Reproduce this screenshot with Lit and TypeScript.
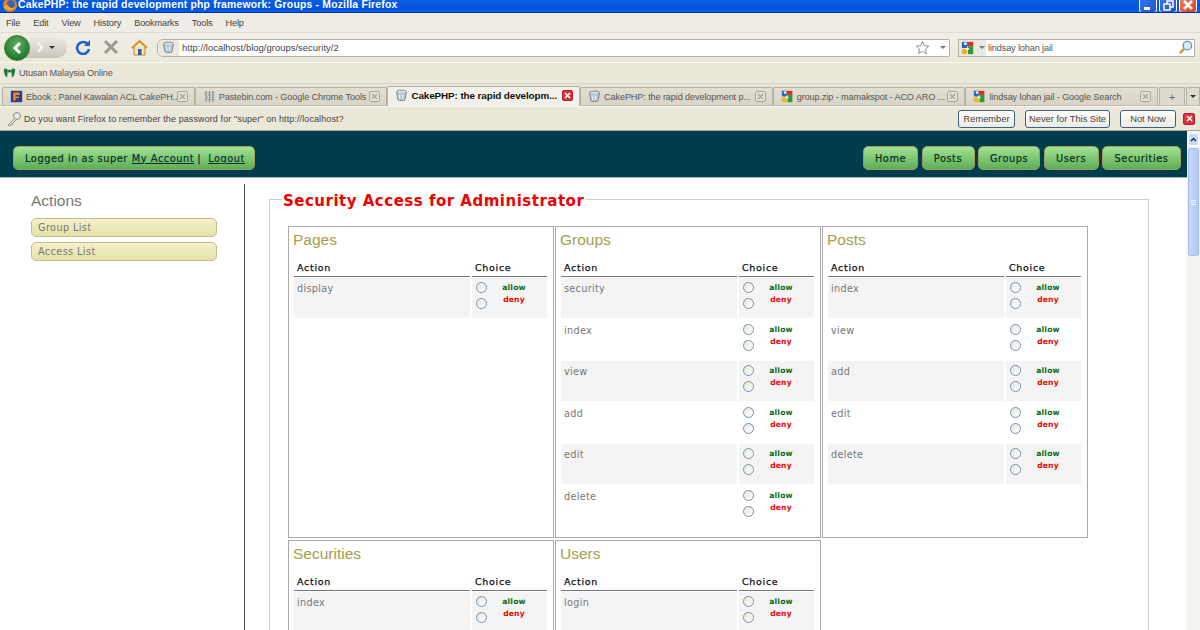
import { LitElement, html, css, svg } from 'lit'
import { customElement } from 'lit/decorators.js'

type Panel = { title: string; actions: string[] }

// only the rows above the fold of the screenshot
const panels: Panel[] = [
  { title: 'Pages', actions: ['display'] },
  { title: 'Groups', actions: ['security', 'index', 'view', 'add', 'edit', 'delete'] },
  { title: 'Posts', actions: ['index', 'view', 'add', 'edit', 'delete'] },
  { title: 'Securities', actions: ['index'] },
  { title: 'Users', actions: ['login'] },
]

const globeIcon = svg`<svg class="ico" viewBox="0 0 16 16"><ellipse cx="8" cy="4" rx="6" ry="2.6" fill="#dfe6ea" stroke="#5c7488"/><path d="M2 4l1.6 9c1 1.6 7.800 1.600 8.800 0L14 4" fill="#b9c8d2" stroke="#5c7488"/><path d="M5 7l1 6M9 7l1 5" stroke="#fff" fill="none"/></svg>`
const googleIcon = svg`<svg class="ico" viewBox="0 0 16 16"><rect x="1" y="1" width="6" height="7" fill="#2a62c8"/><rect x="7" y="1" width="7" height="5" fill="#d8352a"/><rect x="8" y="6" width="6" height="9" fill="#2d9a3c"/><circle cx="4" cy="12" r="3.200" fill="#f0b41c"/><circle cx="5" cy="3" r="1.600" fill="#fff"/><rect x="6" y="8" width="3" height="2" fill="#fff"/></svg>`
const ebookIcon = svg`<svg class="ico" viewBox="0 0 16 16"><rect x="1" y="1" width="14" height="14" fill="#28408c"/><path d="M4 3h8v3H7v2h4v2H7v3H4z" fill="#f08a1c"/></svg>`
const pastebinIcon = svg`<svg class="ico" viewBox="0 0 16 16"><path d="M2 3h3M7 3h2M11 3h3M2 6h2M6 6h4M12 6h2M3 9h3M8 9h2M12 9h2M2 12h2M6 12h2M10 12h4M4 1v14M8 1v14M12 1v14" stroke="#77808a" fill="none"/></svg>`

const tabs = [
  { label: 'Ebook : Panel Kawalan ACL CakePH...', icon: ebookIcon },
  { label: 'Pastebin.com - Google Chrome Tools', icon: pastebinIcon },
  { label: 'CakePHP: the rapid developm...', icon: globeIcon, active: true },
  { label: 'CakePHP: the rapid development p...', icon: globeIcon },
  { label: 'group.zip - mamakspot - ACO ARO ...', icon: googleIcon },
  { label: 'lindsay lohan jail - Google Search', icon: googleIcon },
]

@customElement('app-root')
export class AppRoot extends LitElement {
  static styles = css`
    :host {
      display: block;
      width: 1200px;
      height: 630px;
      overflow: hidden;
      background: #fff;
      font-family: 'Liberation Sans', Arial, sans-serif;
    }

    .ico {
      width: 16px;
      height: 16px;
      flex: none;
      display: block;
    }

    /* window chrome */
    .titlebar {
      height: 13px;
      box-sizing: border-box;
      display: flex;
      align-items: flex-end;
      justify-content: space-between;
      overflow: hidden;
      padding: 0 3px 0 2px;
      background: linear-gradient(#0a5ee6, #0350dc 70%, #0a62ea);
      border-bottom: 1px solid #0a2f9c;
      color: #fff;
      font-weight: bold;
      font-size: 10.400px;
    }

    .title {
      display: flex;
      align-items: center;
      gap: 0;
      height: 15px;
      flex: none;
      white-space: nowrap;
      letter-spacing: 0.200px;
    }

    .winbtns {
      display: flex;
      gap: 2px;
      flex: none;
      height: 21px;
    }

    .winbtn {
      width: 16px;
      height: 20px;
      border: 1px solid #fff;
      border-radius: 3px;
      background: linear-gradient(135deg, #3c7cf0, #2052d0);
      position: relative;
    }

    .winbtn.close {
      background: linear-gradient(135deg, #f09070, #d8401c);
    }

    .winbtn svg {
      position: absolute;
      left: 2px;
      bottom: 1px;
      width: 12px;
      height: 12px;
    }

    .menubar {
      height: 19px;
      background: #eeece4;
      display: flex;
      align-items: center;
      gap: 13px;
      padding: 0 0 0 6px;
      font-size: 9.200px;
      letter-spacing: -0.150px;
      color: #444;
      border-bottom: 1px solid #e0ddd0;
    }

    .navbar {
      height: 29px;
      background: linear-gradient(#f0eee6, #ebe8da);
      border-bottom: 1px solid #f8f6ee;
      display: flex;
      align-items: center;
      padding: 0 5px 0 4px;
    }

    .history {
      display: flex;
      align-items: center;
      flex: none;
      width: 63px;
      height: 21px;
      background: linear-gradient(#eceae2, #c8c6bc);
      border-radius: 11px;
      position: relative;
    }

    .back {
      width: 26px;
      height: 26px;
      border-radius: 50%;
      background: radial-gradient(circle at 50% 35%, #62b060, #1e7a26 75%);
      border: 1px solid #3d7a40;
      box-sizing: border-box;
      display: flex;
      align-items: center;
      justify-content: center;
      flex: none;
    }

    .forward {
      width: 18px;
      display: flex;
      justify-content: center;
      margin-left: 1px;
    }

    .caret {
      width: 0;
      height: 0;
      border: 3px solid transparent;
      border-top: 3px solid #333;
      border-bottom: 0;
      flex: none;
    }

    .tool {
      width: 28px;
      display: flex;
      justify-content: center;
      flex: none;
    }

    .tools {
      display: flex;
      margin-left: 2px;
      margin-right: 4px;
      width: 84px;
      flex: none;
      gap: 0;
    }

    .urlbar {
      width: 793px;
      flex: none;
      height: 18px;
      box-sizing: border-box;
      background: #fff;
      border: 1px solid #b5b3a5;
      border-radius: 6px 2px 2px 6px;
      display: flex;
      align-items: center;
      font-size: 9.400px;
      color: #444;
    }

    .urlicon {
      width: 21px;
      height: 100%;
      background: #ebe9df;
      border-radius: 6px 0 0 6px;
      display: flex;
      align-items: center;
      justify-content: center;
      margin-right: 3px;
      flex: none;
    }

    .urlicon .ico {
      width: 13px;
      height: 13px;
    }

    .urltext {
      flex: 1;
      letter-spacing: 0.050px;
    }

    .urlbar svg.star {
      width: 15px;
      height: 15px;
      margin-right: 10px;
    }

    .urlbar .caret {
      margin-right: 3px;
      border-top-color: #777;
    }

    .searchbar {
      width: 237px;
      margin-left: 8px;
      flex: none;
      height: 18px;
      box-sizing: border-box;
      background: #fff;
      border: 1px solid #b5b3a5;
      display: flex;
      align-items: center;
      font-size: 9.200px;
      letter-spacing: -0.150px;
      color: #555;
    }

    .engine {
      width: 27px;
      height: 100%;
      background: #ebe9df;
      display: flex;
      align-items: center;
      gap: 3px;
      padding-left: 2px;
      margin-right: 2px;
      box-sizing: border-box;
      flex: none;
    }

    .engine .ico {
      width: 14px;
      height: 14px;
    }

    .engine .caret {
      border-top-color: #777;
    }

    .searchtext {
      flex: 1;
    }

    .searchbar svg {
      width: 15px;
      height: 15px;
      margin-right: 1px;
    }

    .bookmarks {
      height: 20px;
      background: #ebe8da;
      display: flex;
      align-items: center;
      gap: 3px;
      padding: 0 0 0 3px;
      font-size: 9.200px;
      letter-spacing: -0.150px;
      color: #555;
      border-bottom: 1px solid #d8d6ca;
    }

    .bookmarks .ico {
      width: 13px;
      height: 13px;
    }

    .tabstrip {
      height: 22px;
      box-sizing: border-box;
      background: #e9e6d8;
      border-bottom: 1px solid #bdbbae;
      display: flex;
      align-items: flex-end;
      padding: 0 0 0 2px;
      font-size: 9.100px;
      letter-spacing: -0.100px;
      color: #555;
    }

    .tab {
      flex: none;
      width: 192.700px;
      height: 18px;
      box-sizing: border-box;
      display: flex;
      align-items: center;
      gap: 3px;
      padding: 0 6px 0 7px;
      background: linear-gradient(#e2dfd2, #d8d5c8);
      border: 1px solid #b5b3a6;
      border-bottom: 0;
      border-radius: 2px 2px 0 0;
      white-space: nowrap;
    }

    .tab.active {
      height: 20px;
      margin-bottom: -1px;
      background: #f2f0e8;
      color: #111;
      font-weight: bold;
      font-size: 9.900px;
      padding-bottom: 2px;
      position: relative;
    }

    .tab .ico {
      width: 13px;
      height: 13px;
    }

    .tabtext {
      flex: 1;
      min-width: 0;
    }

    .tabclose {
      width: 11px;
      height: 11px;
      flex: none;
      box-sizing: border-box;
      border: 1px solid #a8a69a;
      border-radius: 2px;
      background: #e4e2d8;
      display: flex;
      align-items: center;
      justify-content: center;
    }

    .tabclose svg {
      width: 7px;
      height: 7px;
    }

    .tab.active .tabclose,
    .notify .tabclose {
      background: #d8343c;
      border-color: #b0202c;
    }

    .stripbtn {
      flex: none;
      height: 18px;
      box-sizing: border-box;
      width: 26px;
      background: #dedbce;
      border: 1px solid #b5b3a6;
      border-bottom: 0;
      display: flex;
      align-items: center;
      justify-content: center;
      color: #666;
      font-size: 11px;
      margin-left: 1px;
    }

    .stripbtn.narrow {
      width: 14px;
    }

    .notify {
      height: 25px;
      box-sizing: border-box;
      background: #ebe8da;
      border-top: 1px solid #f8f6ee;
      display: flex;
      align-items: center;
      padding: 0 5px 0 6px;
      font-size: 9px;
      color: #444;
      gap: 2px;
      border-bottom: 1px solid #a8a698;
    }

    .notify .msg {
      flex: 1;
      letter-spacing: 0.100px;
    }

    .notify .btns {
      display: flex;
      gap: 10px;
      margin-right: 5px;
    }

    .notifybtn {
      height: 18px;
      box-sizing: border-box;
      border: 1px solid #3c5f88;
      border-radius: 3px;
      background: linear-gradient(#fff, #ecebe2);
      display: flex;
      align-items: center;
      justify-content: center;
      font-size: 9.300px;
    }

    .notify .tabclose {
      width: 12px;
      height: 12px;
    }

    /* page */
    .viewport {
      display: flex;
      height: 499px;
    }

    .page {
      flex: 1;
      min-width: 0;
    }

    .scrollbar {
      width: 13px;
      flex: none;
      box-sizing: border-box;
      background: #f4f4ee;
      display: flex;
      flex-direction: column;
      gap: 2px;
      padding: 2px 1px 0 1px;
    }

    .scrollbtn {
      height: 11px;
      border-radius: 2px;
      background: #c8d8f6;
      border: 1px solid #fff;
      display: flex;
      align-items: center;
      justify-content: center;
    }

    .thumb {
      height: 108px;
      box-sizing: border-box;
      border-radius: 2px;
      background: linear-gradient(90deg, #c8d8f8, #b4c8f4);
      border: 1px solid #fff;
      outline: 1px solid #a9bce8;
      outline-offset: -1px;
      display: flex;
      flex-direction: column;
      justify-content: center;
      gap: 1px;
      align-items: center;
    }

    .thumb span {
      width: 5px;
      height: 1px;
      background: #eef3ff;
      display: block;
    }

    .header {
      height: 47px;
      box-sizing: border-box;
      background: #003d4c;
      border-bottom: 1px solid #a9b3b8;
      display: flex;
      align-items: flex-end;
      justify-content: space-between;
      padding: 0 6px 7px 13px;
    }

    .greenbtn {
      height: 24px;
      box-sizing: border-box;
      display: flex;
      align-items: center;
      border: 1px solid #a39c5c;
      border-radius: 5px;
      background: linear-gradient(#a2e292, #5cae58);
      color: #0a2c1c;
      font-family: 'DejaVu Sans', sans-serif;
      font-size: 9.800px;
      letter-spacing: 0.550px;
      white-space: nowrap;
      -webkit-text-stroke: 0.2px #0a2c1c;
    }

    .account {
      width: 242px;
      padding-left: 11px;
    }

    .account u {
      margin: 0 0 0 4px;
      color: #08303e;
    }

    .account u + u {
      margin: 0;
    }

    .sep {
      margin: 0 3px;
    }

    .topnav {
      display: flex;
      gap: 3.500px;
    }

    .topnav .greenbtn {
      justify-content: center;
    }

    .body {
      display: flex;
      padding-top: 6px;
    }

    .aside {
      width: 214px;
      height: 460px;
      flex: none;
      box-sizing: content-box;
      padding-left: 30px;
      border-right: 1px solid #555;
    }

    .aside h3 {
      margin: 8px 0 8px;
      padding-left: 1px;
      font-weight: normal;
      font-size: 15.500px;
      line-height: 18px;
      color: #777;
    }

    .sidebtn {
      width: 186px;
      height: 19px;
      margin: 0 0 5px 1px;
      box-sizing: border-box;
      border: 1px solid #c3c08a;
      border-radius: 5px;
      background: linear-gradient(#f3f0cc, #e4e2a8);
      font-family: 'DejaVu Sans', sans-serif;
      font-size: 9.700px;
      letter-spacing: 0.400px;
      color: #777;
      padding-left: 6px;
      display: flex;
      align-items: center;
    }

    .main {
      flex: 1;
      padding: 6px 0 0 24px;
      min-width: 0;
    }

    fieldset {
      width: 880px;
      box-sizing: border-box;
      margin: 0;
      padding: 17px 0 0 18px;
      border: 1px solid #ccc;
      min-inline-size: 0;
    }

    legend {
      padding: 3px 1px 0;
      margin-left: -6px;
      color: #f00000;
      font-family: 'DejaVu Sans', sans-serif;
      font-weight: bold;
      font-size: 15px;
      letter-spacing: 0.500px;
      line-height: 16px;
    }

    .panels {
      display: grid;
      grid-template-columns: repeat(3, 266px);
      gap: 2px 1px;
      align-items: start;
    }

    .panel {
      box-sizing: border-box;
      height: 312px;
      border: 1px solid #aaa;
      padding: 4px 5px 0 4px;
    }

    .panel h2 {
      margin: 0 0 13px;
      font-weight: normal;
      font-size: 15.500px;
      line-height: 18px;
      color: #a3a04a;
    }

    .grid {
      display: grid;
      grid-template-columns: 176px 75px;
      gap: 2px;
      margin-left: 1px;
      grid-auto-rows: 39.500px;
    }

    .gridhead {
      display: grid;
      grid-template-columns: 176px 75px;
      gap: 2px;
      margin: 0 0 1px 1px;
    }

    .head {
      height: 15px;
      box-sizing: border-box;
      border-bottom: 1px solid #777;
      padding-left: 3px;
      font-family: 'DejaVu Sans', sans-serif;
      font-size: 9.500px;
      letter-spacing: 0.700px;
      color: #111;
      line-height: 12px;
      -webkit-text-stroke: 0.25px #111;
    }

    .cell {
      font-family: 'DejaVu Sans', sans-serif;
      font-size: 9.700px;
      letter-spacing: 0.300px;
      color: #777;
      padding: 5px 0 0 3px;
      box-sizing: border-box;
    }

    .odd {
      background: #f4f4f4;
    }

    .choicecell {
      display: grid;
      grid-template-columns: 26px 1fr;
      padding: 4px 0 0 4px;
      font-weight: bold;
      font-size: 7.600px;
      letter-spacing: 0.200px;
      box-sizing: border-box;
      font-family: 'DejaVu Sans', sans-serif;
    }

    .radios {
      display: flex;
      flex-direction: column;
      gap: 5px;
    }

    input[type='radio'] {
      appearance: none;
      margin: 0;
      width: 11px;
      height: 11px;
      border: 1.500px solid #7592b2;
      border-radius: 50%;
      background: linear-gradient(135deg, #e6e6de, #fff);
      display: block;
    }

    .labels {
      text-align: center;
      line-height: 12px;
      width: 30px;
      margin: 0 0 0 -3px;
    }

    .allow {
      color: #0a6a14;
    }

    .deny {
      color: #f00000;
    }
  `

  private renderPanel(p: Panel) {
    return html`
      <section class="panel">
        <h2>${p.title}</h2>
        <div class="gridhead">
          <div class="head">Action</div>
          <div class="head">Choice</div>
        </div>
        <div class="grid">
          ${p.actions.map(
            (a, i) => html`
              <div class="cell ${i % 2 === 0 ? 'odd' : ''}">${a}</div>
              <div class="choicecell ${i % 2 === 0 ? 'odd' : ''}">
                <div class="radios">
                  <input type="radio" name="${p.title}-${a}" />
                  <input type="radio" name="${p.title}-${a}" />
                </div>
                <div class="labels">
                  <div class="allow">allow</div>
                  <div class="deny">deny</div>
                </div>
              </div>
            `
          )}
        </div>
      </section>
    `
  }

  private closeX(color = '#a8a69a') {
    return svg`<svg viewBox="0 0 7 7"><path d="M1 1l5 5M6 1l-5 5" stroke="${color}" stroke-width="1.500"/></svg>`
  }

  private renderChrome() {
    return html`
      <div class="titlebar">
        <div class="title">
          <svg class="ico" viewBox="0 0 16 16"><circle cx="8" cy="8" r="7" fill="#e8801c"/><circle cx="9" cy="7" r="4" fill="#3c64b0"/><path d="M2 9c2 5 9 6 12 0-2 3-7 3-8-1z" fill="#f4b02c"/></svg>
          <span>CakePHP: the rapid development php framework: Groups - Mozilla Firefox</span>
        </div>
        <div class="winbtns">
          <div class="winbtn"><svg viewBox="0 0 12 12"><rect x="2" y="8" width="6" height="3" fill="#fff"/></svg></div>
          <div class="winbtn"><svg viewBox="0 0 12 12"><path d="M2 5h6v6H2zM5 5V2h6v6H8" fill="none" stroke="#fff" stroke-width="1.500"/></svg></div>
          <div class="winbtn close"><svg viewBox="0 0 12 12"><path d="M2 2l8 8M10 2l-8 8" stroke="#fff" stroke-width="2.500"/></svg></div>
        </div>
      </div>
      <div class="menubar">
        <span>File</span><span>Edit</span><span>View</span><span>History</span><span>Bookmarks</span><span>Tools</span><span>Help</span>
      </div>
      <div class="navbar">
        <div class="history">
          <div class="back">
            <svg width="12" height="14" viewBox="0 0 12 14"><path d="M9 2L4 7l5 5" fill="none" stroke="#fff" stroke-width="3"/></svg>
          </div>
          <div class="forward">
            <svg width="9" height="11" viewBox="0 0 9 11"><path d="M2 1l4 4.500L2 10" fill="none" stroke="#f4f4f0" stroke-width="2.500"/></svg>
          </div>
          <div class="caret"></div>
        </div>
        <div class="tools">
          <div class="tool">
            <svg width="16" height="16" viewBox="0 0 16 16"><path d="M13 5.500A6 6 0 1 0 14 10" fill="none" stroke="#1c62c8" stroke-width="2.600"/><path d="M15 1v6H9z" fill="#1c62c8"/></svg>
          </div>
          <div class="tool">
            <svg width="16" height="16" viewBox="0 0 16 16"><path d="M2 2l12 12M14 2L2 14" stroke="#9a9a94" stroke-width="3"/></svg>
          </div>
          <div class="tool">
            <svg width="17" height="17" viewBox="0 0 17 17"><path d="M3 8v8h11V8" fill="#f6e2a8" stroke="#c08a28"/><path d="M1 9l7.500-7L16 9" fill="none" stroke="#d8901c" stroke-width="2"/><rect x="7" y="10" width="3.500" height="6" fill="#2c5cb0"/></svg>
          </div>
        </div>
        <div class="urlbar">
          <div class="urlicon">${globeIcon}</div>
          <span class="urltext">http://localhost/blog/groups/security/2</span>
          <svg class="star" viewBox="0 0 16 16"><path d="M8 1.500l2 4.500 4.800.5-3.600 3.200 1 4.800L8 12.200 3.800 14.500l1-4.800L1.200 6.500 6 6z" fill="#fff" stroke="#8c8c84"/></svg>
          <div class="caret"></div>
        </div>
        <div class="searchbar">
          <div class="engine">${googleIcon}<div class="caret"></div></div>
          <span class="searchtext">lindsay lohan jail</span>
          <svg viewBox="0 0 16 16"><circle cx="10" cy="6" r="4.500" fill="#dcecf8" stroke="#5c9ac8" stroke-width="1.500"/><path d="M6.500 9.500L2 14" stroke="#d89030" stroke-width="2.500"/></svg>
        </div>
      </div>
      <div class="bookmarks">
        <svg class="ico" viewBox="0 0 16 16"><path d="M1 3c2-2 4-1 5 1l-1 9C3 12 1 8 1 3zM15 3c-2-2-4-1-5 1l1 9c2-1 4-5 4-10z" fill="#1e7a3c"/><circle cx="8" cy="5" r="2" fill="#1e7a3c"/></svg>
        <span>Utusan Malaysia Online</span>
      </div>
      <div class="tabstrip">
        ${tabs.map(
          (t) => html`
            <div class="tab ${t.active ? 'active' : ''}">
              ${t.icon}
              <span class="tabtext">${t.label}</span>
              <span class="tabclose">${this.closeX(t.active ? '#fff' : '#a8a69a')}</span>
            </div>
          `
        )}
        <div class="stripbtn">+</div>
        <div class="stripbtn narrow"><div class="caret"></div></div>
      </div>
      <div class="notify">
        <svg class="ico" viewBox="0 0 16 16"><circle cx="11" cy="5" r="3.500" fill="#e4e4dc" stroke="#8c8c84"/><path d="M8.500 7.500L2 14l2 1 1-1.500 1.500.5L7 12l3-3" fill="#e4e4dc" stroke="#8c8c84"/></svg>
        <span class="msg">Do you want Firefox to remember the password for "super" on http://localhost?</span>
        <div class="btns">
          ${[['Remember', 57], ['Never for This Site', 85], ['Not Now', 56]].map(
            ([label, w]) => html`<div class="notifybtn" style="width:${w}px">${label}</div>`
          )}
        </div>
        <span class="tabclose">${this.closeX('#fff')}</span>
      </div>
    `
  }

  render() {
    return html`
      ${this.renderChrome()}
      <div class="viewport">
        <div class="page">
          <header class="header">
            <div class="greenbtn account">
              Logged in as super <u>My Account</u><span class="sep">|</span><u>Logout</u>
            </div>
            <nav class="topnav">
              ${[['Home', 55], ['Posts', 53], ['Groups', 62], ['Users', 55], ['Securities', 79]].map(
                ([label, w]) => html`<div class="greenbtn" style="width:${w}px">${label}</div>`
              )}
            </nav>
          </header>
          <div class="body">
            <aside class="aside">
              <h3>Actions</h3>
              <div class="sidebtn">Group List</div>
              <div class="sidebtn">Access List</div>
            </aside>
            <main class="main">
              <fieldset>
                <legend>Security Access for Administrator</legend>
                <div class="panels">${panels.map((p) => this.renderPanel(p))}</div>
              </fieldset>
            </main>
          </div>
        </div>
        <div class="scrollbar">
          <div class="scrollbtn">
            <svg width="7" height="5" viewBox="0 0 7 5"><path d="M1 4l2.500-2.500L6 4" fill="none" stroke="#234" stroke-width="1.500"/></svg>
          </div>
          <div class="thumb"><span></span><span></span><span></span></div>
        </div>
      </div>
    `
  }
}

declare global {
  interface HTMLElementTagNameMap {
    'app-root': AppRoot
  }
}
